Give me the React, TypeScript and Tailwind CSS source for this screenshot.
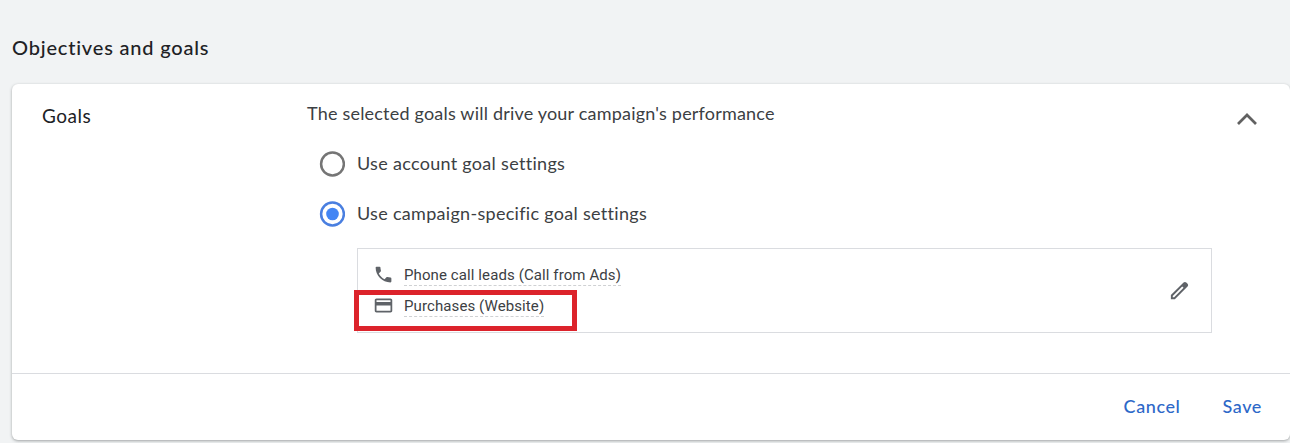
import type { ReactNode } from 'react';

function Radio({ checked, children }: { checked?: boolean; children: ReactNode }) {
  return (
    <label className="flex h-[50px] items-center text-[#3c4043]">
      <svg viewBox="0 0 26 26" className="mr-3 h-[26px] w-[26px] shrink-0" fill="none">
        <circle cx="13.5" cy="13" r="11.4" stroke={checked ? '#4a7fe0' : '#757575'} strokeWidth="2.5" />
        {checked && <circle cx="13.5" cy="13" r="6.3" fill="#4285f4" />}
      </svg>
      <span className="mb-0.5 text-[18px] leading-6 tracking-[0.3px] whitespace-nowrap">{children}</span>
    </label>
  );
}

function Goal({ path, children }: { path: string; children: ReactNode }) {
  return (
    <li className="flex h-[31px] items-start">
      <svg viewBox="0 0 24 24" className="mr-2.5 h-[21px] w-[21px] shrink-0" fill="#5f6368">
        <path d={path} />
      </svg>
      <span className="h-[22px] border-b border-dashed border-[#cfd1d3] font-[Roboto,sans-serif] text-[15px] leading-[22px] tracking-[0.1px] whitespace-nowrap text-[#3c4043]">
        {children}
      </span>
    </li>
  );
}

const phone =
  'M6.62 10.79c1.44 2.83 3.76 5.14 6.59 6.59l2.2-2.2c.27-.27.67-.36 1.02-.24 1.12.37 2.33.57 3.57.57.55 0 1 .45 1 1V20c0 .55-.45 1-1 1-9.39 0-17-7.61-17-17 0-.55.45-1 1-1h3.5c.55 0 1 .45 1 1 0 1.25.2 2.45.57 3.57.11.35.03.74-.25 1.02l-2.2 2.2z';
const card =
  'M20 4H4c-1.11 0-1.99.89-1.99 2L2 18c0 1.11.89 2 2 2h16c1.11 0 2-.89 2-2V6c0-1.11-.89-2-2-2zm0 14H4v-6h16v6zm0-10H4V6h16v2z';
const pencil =
  'M20.41 4.94l-1.35-1.35c-.78-.78-2.05-.78-2.83 0L3 16.82V21h4.18L20.41 7.77c.79-.78.79-2.05 0-2.83zM6.41 19.06L5 19v-1.36l9.82-9.82 1.41 1.41-9.82 9.83z';

export default function App() {
  return (
    <main className="h-[443px] overflow-hidden bg-[#f1f3f4] pl-3 font-[Lato,sans-serif] [font-variant-ligatures:none]">
      <h1 className="flex h-[84px] items-center pt-2.5 text-[20px] font-medium tracking-[0.8px] text-[#202124]">
        Objectives and goals
      </h1>
      <section className="flex h-[356px] flex-col rounded-md bg-white shadow-[0_1px_3px_rgba(60,64,67,0.45)]">
        <div className="flex h-[289px] pl-[30px]">
          <h2 className="w-[265px] pt-5 text-[19px] leading-6 tracking-[0.5px] text-[#202124]">Goals</h2>
          <div className="w-[905px] pt-[17px]">
            <p className="text-[18px] leading-6 tracking-[0.2px] whitespace-nowrap text-[#3c4043]">
              The selected goals will drive your campaign's performance
            </p>
            <div className="mt-[14px] pl-3">
              <Radio>Use account goal settings</Radio>
              <Radio checked>Use campaign-specific goal settings</Radio>
            </div>
            <div className="relative mt-[9px] ml-[50px] flex h-[85px] items-center justify-between border border-[#dadce0] pr-5 pl-[15px]">
              <ul className="h-[53px]">
                <Goal path={phone}>Phone call leads (Call from Ads)</Goal>
                <Goal path={card}>Purchases (Website)</Goal>
              </ul>
              <svg viewBox="0 0 24 24" className="h-[23px] w-[23px]" fill="#5f6368">
                <path d={pencil} />
              </svg>
              <div className="absolute top-[41px] -left-1 h-[41px] w-[223px] border-5 border-[#dc232b]" />
            </div>
          </div>
          <svg viewBox="0 0 20 12" className="mt-[29px] ml-[25px] h-3 w-5" fill="none" stroke="#616161" strokeWidth="2.7">
            <path d="M1 11 10 2l9 9" />
          </svg>
        </div>
        <footer className="flex h-[67px] items-center justify-end gap-[42px] border-t border-[#dadce0] pr-7 pb-0.5 text-[18px] font-medium tracking-[0.6px] text-[#2d68c8]">
          <button>Cancel</button>
          <button>Save</button>
        </footer>
      </section>
    </main>
  );
}
